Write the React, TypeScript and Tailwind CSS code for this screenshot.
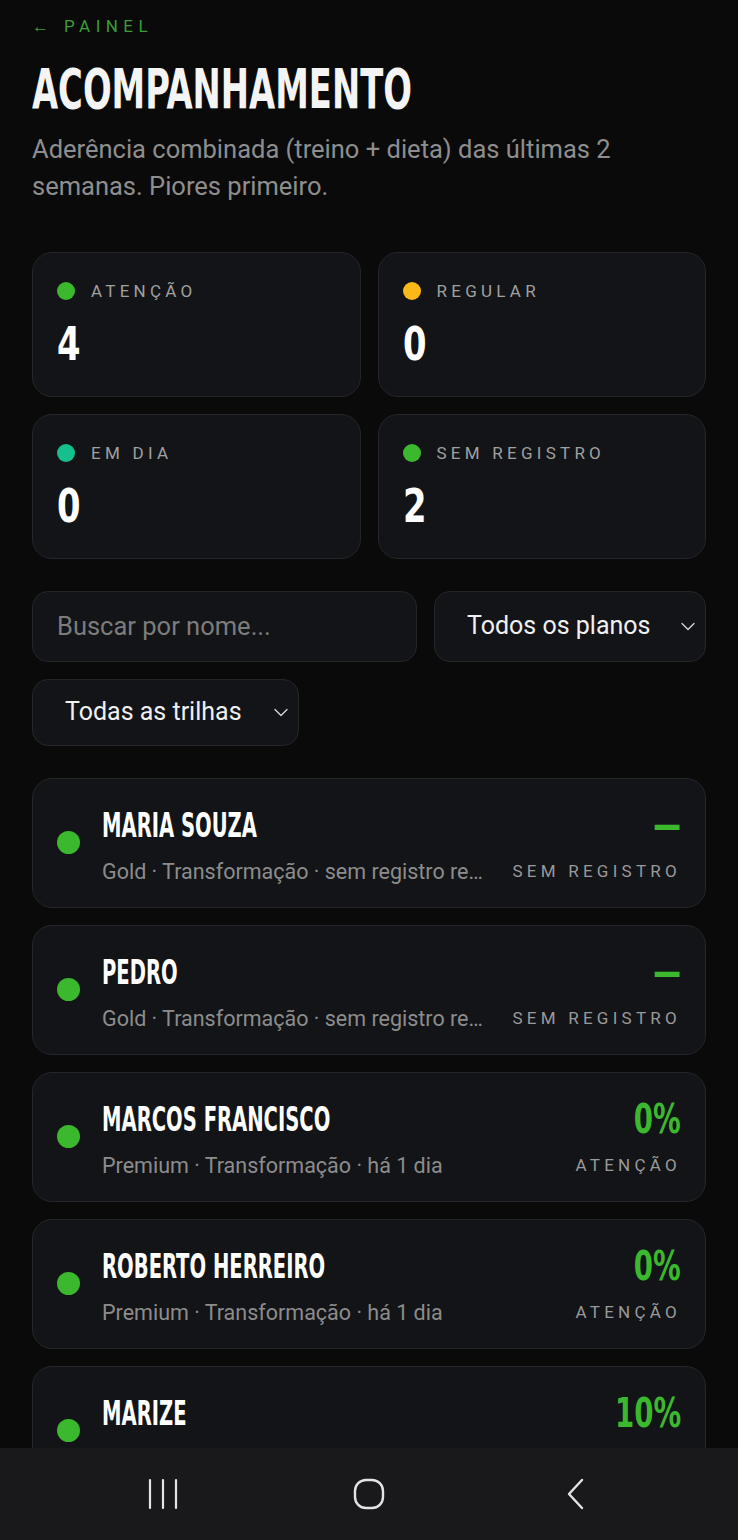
import React from 'react';

const heading = { fontFamily: '"Liberation Sans Narrow", "DejaVu Sans Condensed", "Liberation Sans", sans-serif' };
const body = { fontFamily: 'Roboto, "Liberation Sans", sans-serif' };

interface Stat {
  label: string;
  value: number;
  dot: string;
}

const stats: Stat[] = [
  { label: 'ATENÇÃO', value: 4, dot: 'bg-[#3cb82e]' },
  { label: 'REGULAR', value: 0, dot: 'bg-[#fbb918]' },
  { label: 'EM DIA', value: 0, dot: 'bg-[#16c08e]' },
  { label: 'SEM REGISTRO', value: 2, dot: 'bg-[#3cb82e]' },
];

interface Student {
  name: string;
  meta: string;
  score: string;
  status: string;
}

const students: Student[] = [
  { name: 'MARIA SOUZA', meta: 'Gold · Transformação · sem registro recente', score: '—', status: 'SEM REGISTRO' },
  { name: 'PEDRO', meta: 'Gold · Transformação · sem registro recente', score: '—', status: 'SEM REGISTRO' },
  { name: 'MARCOS FRANCISCO', meta: 'Premium · Transformação · há 1 dia', score: '0%', status: 'ATENÇÃO' },
  { name: 'ROBERTO HERREIRO', meta: 'Premium · Transformação · há 1 dia', score: '0%', status: 'ATENÇÃO' },
  { name: 'MARIZE', meta: 'Premium · Transformação · há 1 dia', score: '10%', status: 'ATENÇÃO' },
];

const Chevron = () => (
  <svg width="18" height="18" viewBox="0 0 18 18" fill="none" stroke="#d8d8d8" strokeWidth="1.3" strokeLinecap="round" strokeLinejoin="round">
    <path d="M3 6.5l6 6 6-6" />
  </svg>
);

const StatCard: React.FC<{ stat: Stat }> = ({ stat }) => (
  <div className="h-[145px] rounded-[20px] border border-[#24262a] bg-[#131417] px-6 pt-[26px]">
    <div className="flex items-center gap-4">
      <span className={`h-[18px] w-[18px] rounded-full ${stat.dot}`} />
      <span className="text-[17px] tracking-[0.25em] text-[#a0a0a0]" style={body}>{stat.label}</span>
    </div>
    <div className="mt-4 origin-left scale-x-[0.8] text-[47px] font-bold leading-none text-white" style={heading}>
      {stat.value}
    </div>
  </div>
);

const StudentRow: React.FC<{ s: Student }> = ({ s }) => (
  <div className="flex h-[130px] shrink-0 items-center gap-[22px] rounded-[20px] border border-[#24262a] bg-[#131417] px-6">
    <span className="h-[23px] w-[23px] shrink-0 rounded-full bg-[#3cb82e]" />
    <div className="flex min-w-0 flex-1 flex-col gap-[10px] pt-[8px]">
      <div className="flex items-center justify-between">
        <span className="inline-block origin-left scale-x-[0.64] whitespace-nowrap text-[34px] font-bold leading-none text-white" style={heading}>
          {s.name}
        </span>
        <span className="inline-block origin-right scale-x-[0.75] text-[41px] font-bold leading-none text-[#3cb82e]" style={heading}>
          {s.score}
        </span>
      </div>
      <div className="flex items-center justify-between gap-7">
        <span className="min-w-0 truncate text-[21.5px] text-[#8c8c8c]" style={body}>{s.meta}</span>
        <span className="shrink-0 text-[17px] tracking-[0.25em] text-[#9a9a9a]" style={body}>{s.status}</span>
      </div>
    </div>
  </div>
);

export default function App() {
  return (
    <div className="flex h-[1540px] flex-col bg-[#0a0a0a]" style={body}>
      <main className="h-[1448px] overflow-hidden px-8 pt-[14px]">
        <div className="text-[17px] tracking-[0.32em] text-[#3b9d35]">← PAINEL</div>
        <h1 className="mt-[21px] origin-left scale-x-[0.67] whitespace-nowrap text-[56px] font-bold leading-none text-[#f4f4f4]" style={heading}>
          ACOMPANHAMENTO
        </h1>
        <p className="mt-[14px] max-w-[630px] text-[25.5px] leading-[37px] text-[#8e8e8e]">
          Aderência combinada (treino + dieta) das últimas 2 semanas. Piores primeiro.
        </p>

        <div className="mt-[47px] grid grid-cols-2 gap-[17px]">
          {stats.map((st) => (
            <StatCard key={st.label} stat={st} />
          ))}
        </div>

        <div className="mt-8 flex gap-[17px]">
          <div className="flex h-[71px] flex-1 items-center rounded-[16px] border border-[#24262a] bg-[#131417] px-6 text-[25.5px] text-[#7c7c7c]">
            Buscar por nome...
          </div>
          <div className="flex h-[71px] w-[272px] items-center justify-between rounded-[16px] border border-[#24262a] bg-[#131417] pl-8 pr-[8px] text-[25px] text-[#f0f0f0]">
            <span>Todos os planos</span>
            <Chevron />
          </div>
        </div>
        <div className="mt-[17px] flex h-[67px] w-[267px] items-center justify-between rounded-[16px] border border-[#24262a] bg-[#131417] pl-8 pr-[8px] text-[25px] text-[#f0f0f0]">
          <span>Todas as trilhas</span>
          <Chevron />
        </div>

        <div className="mt-8 flex flex-col gap-[17px]">
          {students.map((s) => (
            <StudentRow key={s.name} s={s} />
          ))}
        </div>
      </main>

      <nav className="flex h-[92px] items-center justify-center gap-[174px] bg-[#19191b]">
        <svg width="32" height="32" viewBox="0 0 32 32" fill="none" stroke="#e4e4e4" strokeWidth="2.2" strokeLinecap="round">
          <path d="M3 2v28M16 2v28M29 2v28" />
        </svg>
        <svg width="32" height="32" viewBox="0 0 32 32" fill="none" stroke="#e4e4e4" strokeWidth="2.4">
          <rect x="2" y="2" width="28" height="28" rx="11" />
        </svg>
        <svg width="32" height="32" viewBox="0 0 32 32" fill="none" stroke="#e4e4e4" strokeWidth="2.4" strokeLinecap="round" strokeLinejoin="round">
          <path d="M23 2L10 16l13 14" />
        </svg>
      </nav>
    </div>
  );
}
